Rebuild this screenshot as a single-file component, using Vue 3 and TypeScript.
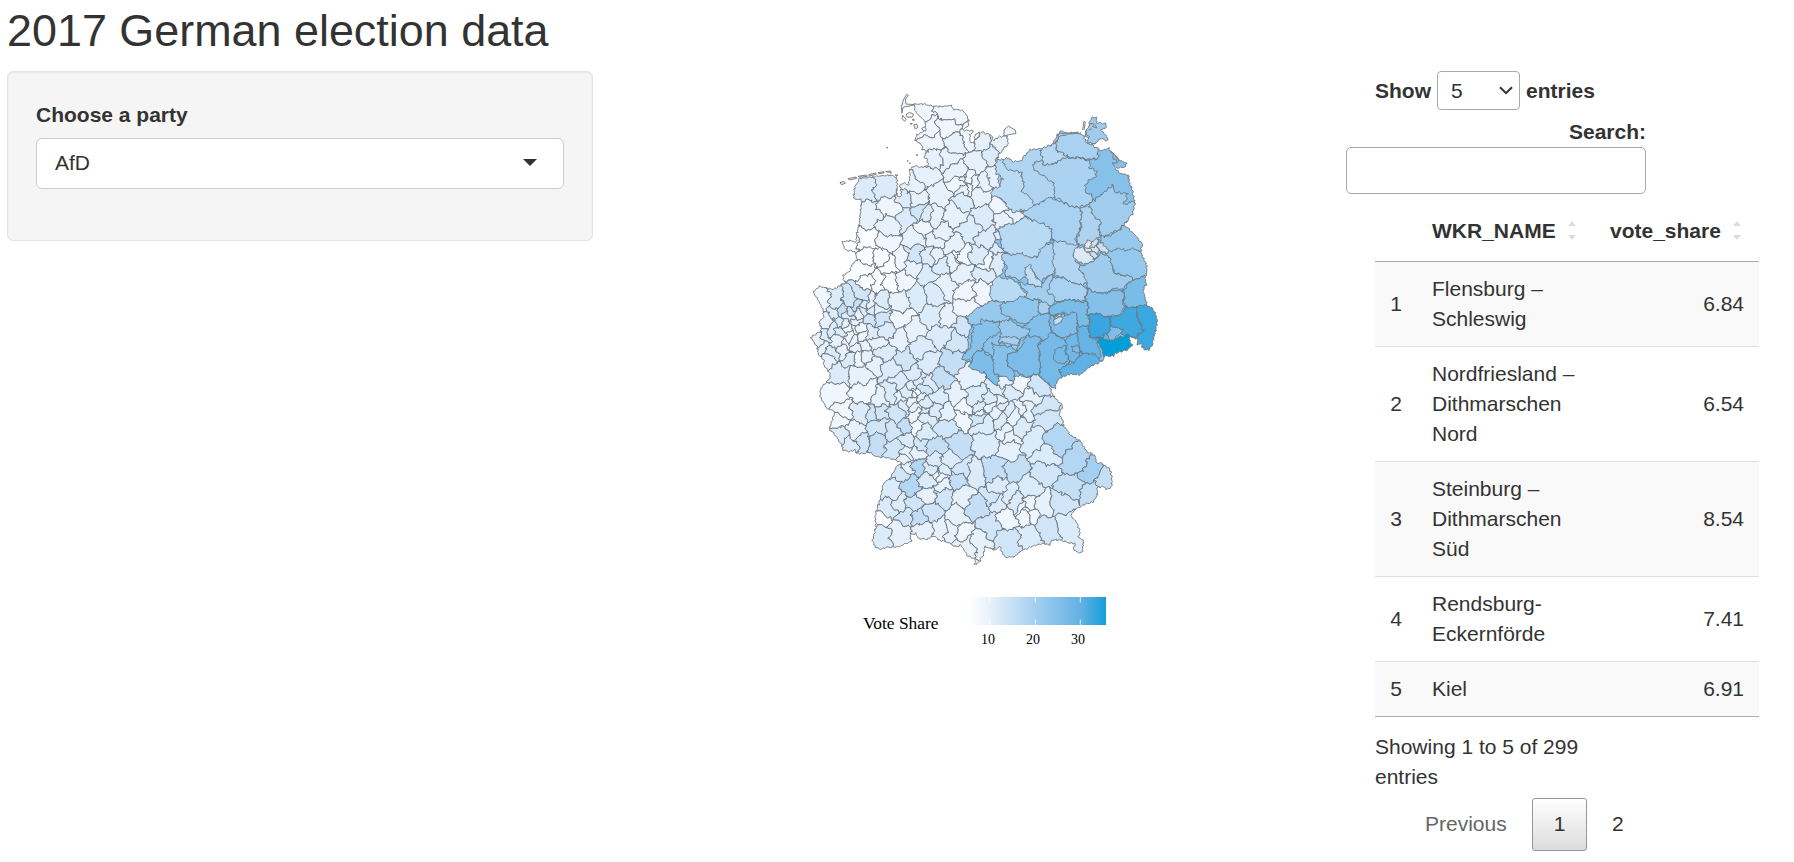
<script setup lang="ts">
type Pt = [number, number]

interface Row {
  id: number
  name: string
  share: string
}

const rows: Row[] = [
  { id: 1, name: 'Flensburg – Schleswig', share: '6.84' },
  { id: 2, name: 'Nordfriesland – Dithmarschen Nord', share: '6.54' },
  { id: 3, name: 'Steinburg – Dithmarschen Süd', share: '8.54' },
  { id: 4, name: 'Rendsburg-Eckernförde', share: '7.41' },
  { id: 5, name: 'Kiel', share: '6.91' },
]

// Fill ramp, from the lowest to the highest share in the western districts
const ramp = ['#fafcff', '#f0f6fd', '#e7f1fb', '#dbebf9', '#d0e5f7', '#c3def5', '#b3d7f3', '#a5cff0']

const parse = (s: string, dx = 0, dy = 0): Pt[] =>
  s.trim().split(/\s+/).map((p) => {
    const [x, y] = p.split(',').map(Number)
    return [x + dx, y + dy]
  })

// Position-based displacement: neighbouring shapes bend alike along a shared edge
function warp([x, y]: Pt, coarse: number, fine: number): Pt {
  const dx =
    coarse * (4.2 * Math.sin(y * 0.131 + x * 0.043 + 1.3) + 3.2 * Math.sin(x * 0.187 - y * 0.171 + 0.4)) +
    fine * (2.1 * Math.sin(y * 0.47 + x * 0.19) + 1.7 * Math.sin(x * 0.61 + y * 0.83 + 2))
  const dy =
    coarse * (4.2 * Math.sin(x * 0.127 - y * 0.051 + 4.1) + 3.2 * Math.sin(y * 0.179 + x * 0.163 + 2.2)) +
    fine * (2.1 * Math.sin(x * 0.43 - y * 0.21 + 3) + 1.7 * Math.sin(y * 0.67 - x * 0.79 + 1))
  return [x + dx, y + dy]
}

function toPath(pts: Pt[], coarse: number, fine: number): string {
  const out: string[] = []
  pts.forEach((a, i) => {
    const b = pts[(i + 1) % pts.length]
    const n = Math.max(1, Math.round(Math.hypot(b[0] - a[0], b[1] - a[1]) / 4.5))
    for (let k = 0; k < n; k++) {
      const p = warp([a[0] + ((b[0] - a[0]) * k) / n, a[1] + ((b[1] - a[1]) * k) / n], coarse, fine)
      out.push(p[0].toFixed(1) + ' ' + p[1].toFixed(1))
    }
  })
  return 'M' + out.join('L') + 'Z'
}

const border: Pt[] = [
  ...parse(`343,72 370,72 398,78 425,80 452,76 462,88 490,92 502,106 506,120 504,140 488,150 515,152 520,160 510,165 510,187 522,188 526,162
  545,156 575,166 582,180 600,170 622,168 624,195 602,215 590,235 600,240 625,233 638,245 665,242 672,228 690,210 722,206 740,200 760,190
  772,165 786,150 792,158 840,160 852,168 860,188 885,200 900,212 925,205 945,225 960,240 978,250 978,260 945,265 960,280 985,285 988,310 997,330
  1005,370 998,400 972,435 1000,460 1028,490 1022,515`),
  ...parse(`440,45 440,75 435,85 440,105 428,120 442,165 465,185 472,215 465,250 455,290 445,302 428,295 425,280 412,285 413,268 390,260 388,270
  398,285 380,300 345,310 340,318 318,318 298,338 270,350 240,375 215,372 185,380 170,395 165,418 150,405 145,395 155,430 165,445 188,465 178,490`, 600, 510),
  ...parse(`308,60 312,82 322,88 330,105 360,122 380,155 405,165 410,188 425,190 450,208 456,235 455,262 440,268 430,260 412,262 412,285 400,305
  375,312 350,325 332,345 350,370 360,395 355,412 370,420 368,450 362,460 340,450 345,430 325,428 300,420 275,420 270,435 250,430 215,440 180,455
  160,470 135,472 122,450 120,440 108,450 75,440 70,465 55,490 42,495 48,480 20,465 15,455`, 480, 960),
  ...parse(`480,435 470,442 440,425 415,420 405,408 380,418 355,415 345,400 330,405 335,425 320,430 300,440 262,442 240,448 225,440 218,420 228,380
  225,345 240,300 250,250 270,235 290,200 305,188 280,178 255,172 230,170 205,155 195,160 170,160 165,150 148,155 130,150 125,135 110,110 88,90
  92,75 105,35 80,25`, 0, 960),
  ...parse(`60,440 62,415 90,385 90,370 80,355 70,345 72,330 55,315 52,290 32,265 45,255 65,240 58,215 70,205 70,180 55,150 40,125 60,108
  70,112 100,118 135,100 128,78 148,65 155,45 172,30 165,5 135,0`, 0, 510),
  ...parse(`125,485 155,482 168,487 170,465 178,430 185,360 160,355 165,320 180,295 210,292 240,288 270,285 290,292 292,318 290,340 295,352 305,345
  300,315 312,308 325,315 330,290 328,270 345,258 362,262 385,258 382,240 370,228 385,212 368,210 365,195 345,180 350,165 378,152 375,125 360,110 345,90`),
]
const borderPath = toPath(border, 0, 0.8)

const seeds: [string, number, number][] = [
  [`355,110,1 380,150,1 390,185,1 455,105,1 445,140,1 470,190,2 400,235,2 450,240,2 545,180,2 600,190,2 470,275,2 530,250,2 575,225,3 380,290,2
  545,310,2 590,290,2 420,345,2 490,360,3 350,360,2 540,345,2 610,375,1 190,325,3 255,320,3 205,405,2 275,380,1 315,355,3 318,415,3 270,440,2
  360,392,4 370,445,1 405,410,2 460,400,2 550,415,3 515,450,3 612,420,2 345,475,2 412,478,2 460,500,2 560,475,3 600,490,3 200,485,0 262,490,1
  150,495,0 480,312,1 493,302,1 508,298,1 505,316,1 518,306,1 490,326,2 375,402,3 514,172,1 420,462,2 338,318,2 645,400,2`, 0, 0],
  [`200,15,0 245,20,0 275,40,0 300,25,1 345,15,4 385,20,3 185,60,0 230,95,0 205,95,0 270,95,0 310,90,1 340,55,2 380,75,3 430,40,3 435,105,2
  410,20,2 470,20,1 455,32,2 480,18,1 490,70,2 540,20,3 560,38,1 590,40,3 550,75,3 500,120,1 545,115,1 355,140,3 400,130,3 295,160,2 240,155,3 500,178,1
  300,210,1 400,200,3 440,210,2 430,250,3 470,270,4 485,230,4 340,245,2 300,265,2 360,295,3 315,330,4 380,340,3 460,340,5 420,390,5 340,380,3
  270,355,3 300,400,3 225,340,2 180,370,2 115,370,3 100,430,1 195,430,1 240,450,2 280,430,3 325,430,3 370,420,4 415,440,3 465,435,2 510,380,2
  530,440,3 570,450,3 600,420,3 540,490,2 490,480,1 440,490,2 380,480,3 345,475,2 310,470,3 235,485,4 125,490,1 180,490,3
  70,150,1 105,150,3 85,215,2 150,150,4 180,135,4 130,185,5 165,170,5 195,165,3 215,160,2 105,195,3 115,215,3 145,200,3 155,185,4 175,195,2
  190,190,3 210,205,4 245,205,4 210,180,3 235,180,2 170,215,2 130,220,2 95,240,3 125,245,3 150,235,1 165,240,1 180,235,1 185,255,1 150,260,1
  160,275,2 140,285,1 165,290,2 215,250,3 260,240,3 230,280,2 190,290,2 110,275,2 75,255,3 55,265,2 65,300,2 95,310,3 80,330,2 155,320,3
  175,320,1 200,320,2 245,310,3 130,300,2 350,422,0 342,436,1 335,455,2 300,440,2 355,395,3 385,400,3 360,432,2 345,412,2`, 0, 510],
  [`120,55,1 165,95,2 125,110,3 155,135,3 185,130,4 235,80,4 225,40,4 290,35,4 285,95,4 230,130,5 285,145,4 316,90,5 345,35,1 347,90,1 322,115,3
  380,45,3 360,130,4 370,100,3 405,30,3 440,80,4 405,140,5 485,45,1 475,140,5 325,160,2 350,165,2 318,180,2 320,200,2 355,195,6 300,215,4
  405,180,3 435,210,3 390,210,3 450,182,3 405,225,1 425,232,1 430,250,2 385,240,3 470,240,5 485,210,4 335,260,6 275,270,3 385,285,2 430,290,4
  485,290,2 525,220,3 560,130,2 540,50,4 265,325,3 240,360,0 245,400,3 295,395,2 320,345,4 300,310,3 355,350,5 335,310,4 395,335,4 375,395,2
  420,390,2 470,350,2 455,390,2 490,400,1 530,320,5 530,420,2 500,430,2 375,12,3`, 0, 960],
  [`60,30,3 95,20,2 130,20,3 75,70,3 125,60,3 160,45,2 190,25,2 255,45,4 142,95,2 155,108,2 180,85,3 215,120,3 150,145,2 290,125,6 255,170,3
  350,190,6 390,215,7 430,245,5 395,275,5 250,215,4 335,260,5 210,260,3 170,210,5 100,210,5 100,290,4 118,302,3 140,290,3 170,310,3 190,322,1
  202,328,1 212,340,1 205,316,1 198,345,1 245,320,2 145,355,1 305,315,4 320,370,3 265,385,4 210,410,3 145,420,4 90,380,4 112,265,3 110,40,2 80,130,3`, 480, 960],
  [`60,395,1 30,430,3 115,410,4 10,400,2 75,475,2 130,480,4 20,480,3 2,455,2 95,440,2`, 600, 510],
]

const sites = seeds.flatMap(([s, dx, dy]) =>
  s.trim().split(/\s+/).map((t) => {
    const [x, y, v] = t.split(',').map(Number)
    return { p: [x + dx, y + dy] as Pt, fill: ramp[v] }
  }),
)

// Cell around one site: the bounding box cut by every perpendicular bisector
function cell(site: Pt): Pt[] {
  let poly: Pt[] = [[-40, -40], [1150, -40], [1150, 1540], [-40, 1540]]
  for (const { p: o } of sites) {
    if (o[0] === site[0] && o[1] === site[1]) continue
    const nx = o[0] - site[0]
    const ny = o[1] - site[1]
    const c = (nx * (o[0] + site[0]) + ny * (o[1] + site[1])) / 2
    const next: Pt[] = []
    poly.forEach((a, i) => {
      const b = poly[(i + 1) % poly.length]
      const da = a[0] * nx + a[1] * ny - c
      const db = b[0] * nx + b[1] * ny - c
      if (da <= 0) next.push(a)
      if (da <= 0 !== db <= 0) {
        const t = da / (da - db)
        next.push([a[0] + (b[0] - a[0]) * t, a[1] + (b[1] - a[1]) * t])
      }
    })
    poly = next
  }
  return poly
}

const cells = sites.map((s) => ({ d: toPath(cell(s.p), 1, 1), fill: s.fill }))

const north: [string, string][] = [
  ['#b9dbf3', '-10,230 25,230 60,275 75,310 72,330 90,350 110,372 100,385 50,397 25,385 0,356 -27,348 -25,330 0,320 8,295 -12,280'],
  ['#b0d5f2', '5,230 130,195 130,245 105,250 115,270 140,290 165,310 170,345 155,357 108,374 85,350 68,330 70,310 66,280 20,265'],
  ['#abd2f1', '130,255 160,250 205,232 240,232 290,235 300,340 285,350 270,370 240,382 200,375 165,350 160,310 135,290 103,270 100,250 125,240'],
  ['#b5d8f3', '125,200 170,185 172,215 200,225 205,235 165,245 155,255 130,255 125,235'],
  ['#a9d1f1', '170,190 175,140 250,150 265,190 300,200 305,215 292,238 240,235 200,228 172,215'],
  ['#a0ccee', '285,350 300,330 330,310 410,330 410,400 372,435 330,465 300,468 298,430 275,400 270,372'],
  ['#86c1ea', '240,235 290,238 300,200 340,195 390,250 385,285 400,320 410,368 370,370 383,342 345,335 333,318 325,332 300,345 285,368 275,345 258,335 260,310 285,290 290,270 270,262 265,240'],
  ['#9fccee', '255,150 255,105 330,105 330,195 290,195 262,188'],
  ['#b8daf3', '0,440 40,430 75,412 120,425 155,440 155,475 140,500 130,530 60,535 10,515 5,490 -2,470'],
  ['#a9d1f1', '62,400 105,375 155,352 200,375 240,382 245,415 238,450 228,475 235,500 200,500 155,475 155,445 120,430 75,408'],
  ['#add3f1', '240,385 265,375 280,405 298,420 298,465 290,490 265,490 250,500 230,490 240,455 245,415'],
  ['#97c9ed', '300,465 330,470 372,435 410,460 435,490 430,520 380,520 330,515 305,500'],
]

const centre: [string, string][] = [
  ['#abd2f1', '18,5 25,15 60,10 110,25 125,-5 160,-20 168,0 160,70 120,95 95,60 80,80 55,90 15,75 20,50 5,20'],
  ['#b2d6f2', '160,-30 230,-15 225,35 245,45 240,65 265,75 262,95 250,108 200,90 165,75 160,50'],
  ['#95c8ed', '310,5 345,-2 430,0 450,45 445,80 400,88 345,65 330,35'],
  ['#9fcbed', '240,45 275,40 300,12 330,20 340,65 368,75 400,85 370,115 330,120 300,132 262,115 262,95 240,65'],
  ['#78bce8', '400,88 445,78 450,165 410,172 375,170 370,120'],
  ['#84c0ea', '262,115 300,132 330,125 368,120 372,170 360,190 330,202 290,190 265,195 260,150'],
  ['#a2ceef', '55,95 115,110 160,70 165,155 150,165 115,150 60,142 80,125'],
  ['#a9d1f1', '165,80 200,90 250,108 260,115 258,150 200,150 165,155 160,138 142,125 148,100'],
  ['#c0def5', '80,50 92,42 105,80 128,95 125,110 90,105 75,80'],
  ['#b9daf4', '-30,110 -5,80 30,85 60,105 82,135 60,145 30,160 0,155 -30,145'],
  ['#8fc6ec', '0,160 35,155 65,140 115,152 118,190 110,215 90,222 50,215 5,190'],
  ['#80bfe9', '60,235 90,215 118,190 150,195 155,270 120,270 80,260'],
  ['#a5d0f0', '115,160 135,152 150,170 148,190 125,195 115,180'],
  ['#78bce8', '150,165 200,150 258,155 265,200 265,230 232,230 230,195 200,190 150,195'],
  ['#7cbde9', '150,195 200,195 215,182 232,195 230,250 190,265 155,250 148,215'],
  ['#b0d4f0', '157,198 180,194 185,202 160,208'],
  ['#c6dff4', '160,208 187,202 188,215 165,222'],
  ['#9ac9ed', '0,215 30,208 55,230 88,235 90,255 60,270 50,300 20,290 0,275'],
  ['#a5d0f0', '0,262 50,260 60,272 50,285 20,282 0,275'],
  ['#85c1ea', '-20,280 20,290 50,300 25,315 20,345 42,360 42,392 30,390 -20,368'],
  ['#7bbce8', '25,315 60,295 80,255 120,265 115,310 125,340 115,375 70,378 40,360 20,345'],
  ['#76bbe8', '115,290 150,250 190,265 205,290 205,340 180,365 190,380 165,425 145,405 118,372 122,335'],
  ['#74bae7', '165,300 195,285 205,330 185,345 160,325'],
  ['#6fb8e7', '195,270 215,252 235,250 245,300 225,340 205,330'],
  ['#66b4e5', '232,230 268,230 268,262 290,268 305,320 290,330 260,310 245,310 235,285'],
  ['#79bbe8', '218,292 235,288 245,300 230,312 218,304'],
  ['#5fb1e4', '180,355 225,335 250,308 285,315 310,335 240,385 185,385'],
  ['#3aa6df', '268,195 295,190 330,205 335,240 310,262 290,262 268,262'],
  ['#3fa8e0', '330,205 365,190 375,170 410,172 412,200 430,240 405,262 360,250 365,238 335,235'],
  ['#3ba7e0', '408,172 442,160 475,185 480,215 470,310 425,300 405,265 430,240 415,200'],
  ['#009fda', '290,262 340,270 388,252 405,285 345,325 318,322 305,300'],
  ['#7fbde8', '322,252 330,233 345,233 368,240 362,252 345,268 332,272'],
  ['#68b2e2', '308,255 322,252 330,265 326,272 310,265'],
  ['#dbe9f7', '225,-10 255,-5 285,25 272,42 240,38 220,20'],
  ['#e3eaf2', '252,-20 262,-32 275,-25 272,-8 256,-4'],
  ['#cfdfee', '275,-25 288,-36 298,-24 288,-10 272,-8'],
  ['#d4dfe9', '290,-15 310,-22 326,0 318,12 300,4'],
  ['#e6e6ea', '256,-4 272,-9 280,2 268,8'],
  ['#d9e5ef', '272,-9 288,-11 300,4 290,14 280,3'],
  ['#cfe0f0', '265,8 280,3 290,14 282,26'],
]

const thuringia: [string, string][] = [
  ['#86c2eb', '505,200 545,205 600,220 605,250 560,270 548,300 520,310 515,330 485,330 510,290 520,245'],
  ['#97c9ed', '495,200 540,170 580,150 612,155 630,220 600,218 545,208 540,222 512,225'],
  ['#8ac4ec', '552,275 570,262 600,245 625,260 635,350 590,330 552,300'],
  ['#7cbde9', '548,300 590,335 632,350 632,375 598,380 590,405 578,400 550,370 508,350 520,310'],
]

// Ground tone of the eastern states, under their districts
const east = [
  { d: toPath(parse('585,235 600,320 575,345 602,356 630,385 665,398 680,408 630,435 602,440 605,500 620,540 1060,540 1060,200 800,100 700,190'), 0.5, 0.8), fill: '#add3f1' },
  { d: toPath(parse('-20,-30 20,20 0,80 -20,150 -80,190 -90,240 -105,330 -50,370 -25,395 0,375 60,380 118,375 165,425 480,290 440,-30', 600, 510), 0.5, 0.8), fill: '#88c3eb' },
]

const traced = [
  ...north.map(([fill, s]) => ({ d: toPath(parse(s, 600, 0), 0.5, 1), fill })),
  ...thuringia.map(([fill, s]) => ({ d: toPath(parse(s, 0, 510), 0.5, 1), fill })),
  ...centre.map(([fill, s]) => ({ d: toPath(parse(s, 600, 510), 0.5, 0.9), fill })),
]

const islands = [
  'M306 100L304 80L310 60L320 43L325 46L316 58L318 72L345 74L330 78L316 80L308 84Z',
  'M308 106L318 118L314 124L306 116Z', 'M318 104L328 97L340 102L338 111L322 112Z',
  'M341 135L350 132L354 142L346 147Z', 'M336 119L342 117L342 122ZM330 131L337 130L335 133Z',
  'M365 145L375 140L388 146L385 155L370 152Z',
  'M259 202L263 202L262 205ZM349 224L353 224L352 228ZM321 243L325 243ZM328 249L332 250Z',
  'M120 308L132 304L136 310L124 314Z', 'M144 296L168 291L170 295L148 300Z', 'M174 289L200 285L202 289L178 292Z',
  'M206 284L228 279L228 283L208 288Z', 'M234 278L252 275L252 279L236 281Z', 'M257 275L272 273L274 280L268 277ZM286 284L294 286L288 288Z',
  'M612 168L612 150L625 138L645 150L648 160L628 164Z',
].join('')

const rugen = toPath(parse('868,130 874,113 890,112 890,128 906,130 918,130 918,142 902,150 918,168 924,180 916,182 902,174 885,192 862,187 866,175 856,168 858,148 866,142'), 0, 0.7)
const inlets = 'M848 150L852 124L856 126L852 150M868 130L882 132L878 140L890 144L886 134M866 150L876 146M860 165L870 170M930 215L940 222L938 236L950 240L948 250L936 248L944 260M945 228L956 240L952 250M774 168L780 158L790 162L834 156L836 160L800 162M770 190L775 172L784 166L800 166'
</script>

<template>
  <main class="page">
    <h2>2017 German election data</h2>
    <div class="columns">
      <aside class="well">
        <label class="party-label">Choose a party</label>
        <div class="party-select">
          <span>AfD</span>
          <i class="caret"></i>
        </div>
      </aside>

      <figure class="map">
        <svg class="germany" viewBox="0 0 1110 1500" width="370" height="500">
          <defs>
            <clipPath id="land"><path :d="borderPath" /><path :d="rugen" /></clipPath>
          </defs>
          <path :d="islands" class="shore" fill="#eef5fc" />
          <g clip-path="url(#land)" class="districts">
            <path v-for="(c, i) in cells" :key="'c' + i" :d="c.d" :fill="c.fill" />
            <path v-for="(e, i) in east" :key="'e' + i" :d="e.d" :fill="e.fill" />
            <path v-for="(t, i) in traced" :key="'t' + i" :d="t.d" :fill="t.fill" />
          </g>
          <path :d="borderPath" class="shore" fill="none" />
          <path :d="rugen" class="shore" fill="none" />
          <path :d="inlets" class="shore" fill="none" />
        </svg>
        <figcaption class="legend">
          <span class="legend-title">Vote Share</span>
          <div class="legend-scale">
            <svg width="137" height="28" viewBox="0 0 137 28">
              <defs>
                <linearGradient id="scale">
                  <stop offset="0" stop-color="#fff" />
                  <stop offset=".15" stop-color="#e8f1fb" />
                  <stop offset=".5" stop-color="#a1cdef" />
                  <stop offset=".82" stop-color="#62b1e4" />
                  <stop offset="1" stop-color="#149fdb" />
                </linearGradient>
              </defs>
              <rect width="137" height="28" fill="url(#scale)" />
              <path d="M20.700 0v5.500M20.700 22.500V28M66.300 0v5.500M66.300 22.500V28M111.300 0v5.500M111.300 22.500V28" stroke="#fff" stroke-opacity=".75" />
            </svg>
            <div class="ticks"><span>10</span><span>20</span><span>30</span></div>
          </div>
        </figcaption>
      </figure>

      <section class="data">
        <div class="length">
          <span>Show</span>
          <div class="length-select">
            <span>5</span>
            <svg width="14" height="9" viewBox="0 0 14 9"><path d="M1 1.200L7 7.200L13 1.200" fill="none" stroke="#333" stroke-width="2" /></svg>
          </div>
          <span>entries</span>
        </div>
        <div class="filter">
          <label>Search:</label>
          <div class="search"></div>
        </div>
        <div class="table">
          <div class="row head">
            <span></span>
            <span class="th">WKR_NAME<svg class="sort" width="8" height="19" viewBox="0 0 8 19"><path d="M0 5L4 0L8 5ZM0 14L4 19L8 14Z" fill="#dcdcdc" /></svg></span>
            <span class="th last">vote_share<svg class="sort" width="8" height="19" viewBox="0 0 8 19"><path d="M0 5L4 0L8 5ZM0 14L4 19L8 14Z" fill="#dcdcdc" /></svg></span>
          </div>
          <div v-for="r in rows" :key="r.id" class="row body" :class="{ odd: r.id % 2 === 1 }">
            <span class="id">{{ r.id }}</span>
            <span class="name">{{ r.name }}</span>
            <span class="share">{{ r.share }}</span>
          </div>
        </div>
        <div class="info">Showing 1 to 5 of 299 entries</div>
        <div class="pages">
          <span class="prev">Previous</span>
          <span class="current">1</span>
          <span class="next">2</span>
        </div>
      </section>
    </div>
  </main>
</template>

<style>
body {
  overflow: hidden;
  background: #fff;
}
</style>

<style scoped>
* {
  box-sizing: border-box;
}
.page {
  padding: 6px 0 0 7px;
  height: 862px;
  overflow: hidden;
  font: 21px/30px "Liberation Sans", Arial, sans-serif;
  color: #333;
}
h2 {
  margin: 0 0 15px;
  font-size: 44.9px;
  line-height: 50px;
  font-weight: 400;
}
.columns {
  display: flex;
  align-items: flex-start;
}
.well {
  width: 586px;
  height: 170px;
  padding: 28px 28px 0;
  border: 1px solid #e3e3e3;
  border-radius: 6px;
  background: #f5f5f5;
  box-shadow: inset 0 1px 2px rgba(0, 0, 0, 0.06);
}
.party-label {
  display: block;
  margin-bottom: 8px;
  font-weight: 700;
}
.party-select {
  display: flex;
  justify-content: space-between;
  align-items: center;
  height: 51px;
  padding: 0 26px 2px 18px;
  border: 1px solid #ccc;
  border-radius: 6px;
  background: #fff;
}
.caret {
  border: 7px solid transparent;
  border-top: 7px solid #333;
  border-bottom: 0;
}
.map {
  width: 370px;
  margin: 9px 0 0 207px;
}
.germany {
  display: block;
}
.districts path {
  stroke: #69747e;
  stroke-width: 2.7;
  stroke-linejoin: round;
}
.shore {
  stroke: #7c8186;
  stroke-width: 3;
  stroke-linejoin: round;
}
.legend {
  display: flex;
  margin: 17px 0 0 63px;
  color: #000;
  font-family: "Liberation Serif", "Times New Roman", serif;
}
.legend-title {
  width: 106px;
  padding-top: 11px;
  font-size: 17.4px;
}
.legend-scale svg {
  display: block;
}
.ticks {
  display: flex;
  gap: 31px;
  margin: 6px 0 0 12px;
  font-size: 14px;
  line-height: 18px;
}
.data {
  width: 384px;
  margin-left: 205px;
}
.length {
  display: flex;
  align-items: center;
  gap: 6px;
  height: 39px;
  font-weight: 700;
}
.length-select {
  display: flex;
  align-items: center;
  justify-content: space-between;
  width: 83px;
  height: 39px;
  padding: 0 6px 0 13px;
  border: 1px solid #aaa;
  border-radius: 4px;
  font-weight: 400;
}
.filter {
  display: flex;
  flex-direction: column;
  align-items: flex-end;
  width: 271px;
  margin-top: 7px;
  font-weight: 700;
}
.search {
  width: 300px;
  height: 47px;
  border: 1px solid #aaa;
  border-radius: 5px;
}
.table {
  margin-top: 6px;
  border-bottom: 1px solid #aaa;
}
.row {
  display: grid;
  grid-template-columns: 42px 178px 164px;
  align-items: center;
}
.head {
  height: 62px;
  border-bottom: 1px solid #aaa;
  font-weight: 700;
}
.th {
  display: flex;
  align-items: center;
  justify-content: space-between;
  padding: 0 19px 0 15px;
}
.th.last {
  padding: 0 18px 0 15px;
}
.body {
  padding: 12px 0;
  border-top: 1px solid #ddd;
}
.head + .body {
  padding-top: 12px;
  border-top: 0;
}
.odd {
  background: #f9f9f9;
}
.id {
  text-align: center;
}
.name {
  padding: 0 12px 0 15px;
}
.share {
  padding-right: 15px;
  text-align: right;
}
.info {
  width: 230px;
  margin-top: 15px;
}
.pages {
  display: flex;
  align-items: center;
  height: 53px;
  margin-top: 6px;
  padding-left: 50px;
}
.prev {
  width: 107px;
  color: #666;
}
.current {
  width: 55px;
  height: 53px;
  border: 1px solid #979797;
  border-radius: 3px;
  background: linear-gradient(#fff, #dcdcdc);
  line-height: 49px;
  text-align: center;
}
.next {
  padding-left: 25px;
}
.prev,
.next {
  padding-bottom: 2px;
}
</style>
